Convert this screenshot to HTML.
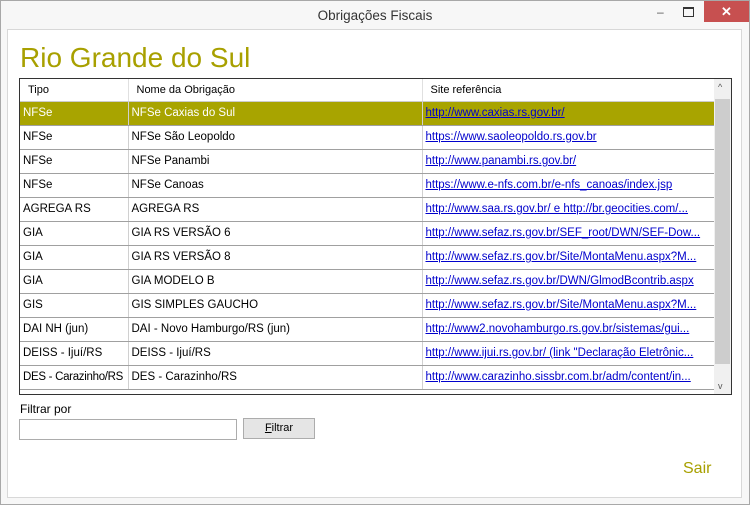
<html><head><style>
body{margin:0;width:750px;height:505px;background:#f0f0f0;font-family:"Liberation Sans",sans-serif;position:relative;overflow:hidden}
.frame{position:absolute;left:0;top:0;width:748px;height:503px;border:1px solid #a8a8a8;background:#f7f7f7}
.title{position:absolute;top:7px;width:100%;text-align:center;font-size:13.5px;color:#333}
.close{position:absolute;right:0;top:0;width:45px;height:21px;background:#c75050;color:#fff;text-align:center;font-size:13px;line-height:21px;font-weight:bold}
.panel{position:absolute;left:7px;top:29px;width:733px;height:467px;background:#fff;border:1px solid #d8d8d8}
h1{position:absolute;left:20px;top:42px;margin:0;font-weight:normal;font-size:28px;color:#a8a000}
.grid{position:absolute;left:19px;top:78px;width:711px;height:315px;border:1px solid #333;overflow:hidden;background:#fff}
table{border-collapse:collapse;font-size:11.5px;position:absolute;left:0;top:0;width:694px;table-layout:fixed}
td{height:24px;border-right:1px solid #d0d0d0;border-bottom:1px solid #a0a0a0;padding:0 3px;white-space:nowrap;overflow:hidden;color:#000}
th{height:22px;font-weight:normal;text-align:left;padding:0 8px;font-size:11px;border-right:1px solid #e0e0e0;border-bottom:1px solid #ccc}
td a{color:#00c;text-decoration:underline}
tr.sel td{background:#a8a400;color:#fff}
tr.sel td a{color:#00c}
.sb{position:absolute;right:0;top:0;width:17px;height:315px;background:#f0f0f0}
.thumb{position:absolute;right:1px;top:20px;width:15px;height:265px;background:#cdcdcd}
</style></head><body>
<div class="frame">
<div class="title">Obrigações Fiscais</div>
<div style="position:absolute;left:656px;top:4px;font-size:12px;color:#555">–</div>
<div style="position:absolute;left:682px;top:6px;width:9px;height:7px;border:1px solid #333;border-top-width:2px"></div>
<div class="close">✕</div>
</div>
<div class="panel"></div>
<h1>Rio Grande do Sul</h1>
<div class="grid">
<table>
<colgroup><col style="width:108px"><col style="width:294px"><col style="width:292px"></colgroup>
<tr><th>Tipo</th><th>Nome da Obrigação</th><th>Site referência</th></tr>
<tr class="sel"><td>NFSe</td><td>NFSe Caxias do Sul</td><td><a>http://www.caxias.rs.gov.br/</a></td></tr>
<tr><td>NFSe</td><td>NFSe São Leopoldo</td><td><a>https://www.saoleopoldo.rs.gov.br</a></td></tr>
<tr><td>NFSe</td><td>NFSe Panambi</td><td><a>http://www.panambi.rs.gov.br/</a></td></tr>
<tr><td>NFSe</td><td>NFSe Canoas</td><td><a>https://www.e-nfs.com.br/e-nfs_canoas/index.jsp</a></td></tr>
<tr><td>AGREGA RS</td><td>AGREGA RS</td><td><a>http://www.saa.rs.gov.br/ e http://br.geocities.com/...</a></td></tr>
<tr><td>GIA</td><td>GIA RS VERSÃO 6</td><td><a>http://www.sefaz.rs.gov.br/SEF_root/DWN/SEF-Dow...</a></td></tr>
<tr><td>GIA</td><td>GIA RS VERSÃO 8</td><td><a>http://www.sefaz.rs.gov.br/Site/MontaMenu.aspx?M...</a></td></tr>
<tr><td>GIA</td><td>GIA MODELO B</td><td><a>http://www.sefaz.rs.gov.br/DWN/GlmodBcontrib.aspx</a></td></tr>
<tr><td>GIS</td><td>GIS SIMPLES GAUCHO</td><td><a>http://www.sefaz.rs.gov.br/Site/MontaMenu.aspx?M...</a></td></tr>
<tr><td>DAI NH (jun)</td><td>DAI - Novo Hamburgo/RS (jun)</td><td><a>http://www2.novohamburgo.rs.gov.br/sistemas/gui...</a></td></tr>
<tr><td>DEISS - Ijuí/RS</td><td>DEISS - Ijuí/RS</td><td><a>http://www.ijui.rs.gov.br/ (link "Declaração Eletrônic...</a></td></tr>
<tr><td style="letter-spacing:-0.3px">DES - Carazinho/RS</td><td>DES - Carazinho/RS</td><td><a>http://www.carazinho.sissbr.com.br/adm/content/in...</a></td></tr>
</table>
<div class="sb"><div class="thumb"></div><div style="position:absolute;top:3px;left:4px;font-size:9px;color:#555">^</div><div style="position:absolute;bottom:3px;left:4px;font-size:9px;color:#555">v</div></div>
</div>
<div style="position:absolute;left:20px;top:402px;font-size:12px">Filtrar por</div>
<div style="position:absolute;left:19px;top:419px;width:216px;height:19px;border:1px solid #acacac;background:#fff"></div>
<div style="position:absolute;left:243px;top:418px;width:70px;height:19px;border:1px solid #acacac;background:#e5e5e5;font-size:11px;text-align:center;line-height:19px"><u>F</u>iltrar</div>
<div style="position:absolute;left:683px;top:460px;font-size:16px;color:#a8a000">Sair</div>
</body></html>
